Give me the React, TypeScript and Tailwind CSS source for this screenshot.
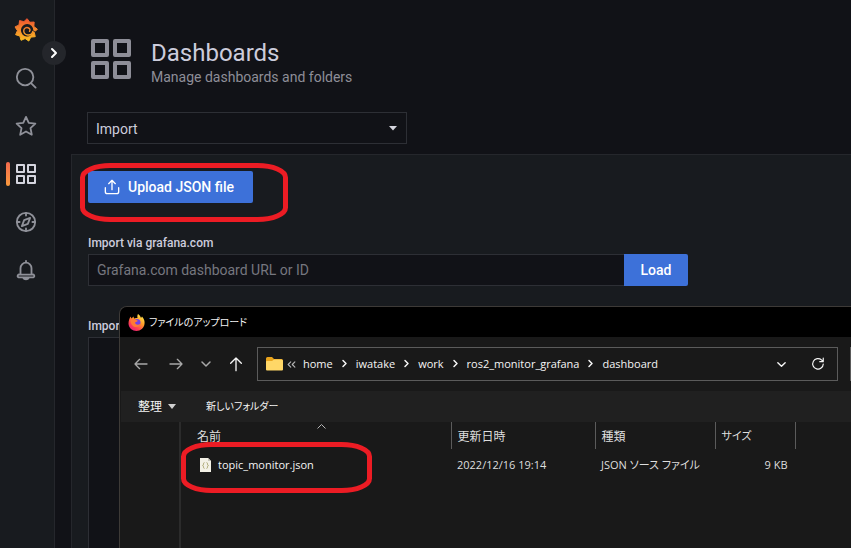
import type { ReactNode } from "react";

const RED = "#ec1c24";

function Tile({ size, stroke, className }: { size: number; stroke: number; className?: string }) {
  const gap = size / 10;
  const box = (size - gap) / 2;
  const inner = box - stroke;
  const spots = [stroke / 2, box + gap + stroke / 2];
  return (
    <svg width={size} height={size} viewBox={`0 0 ${size} ${size}`} fill="none" stroke="currentColor" strokeWidth={stroke} strokeLinejoin="round" className={className}>
      {spots.map((y) => spots.map((x) => <rect key={`${x}-${y}`} x={x} y={y} width={inner} height={inner} />))}
    </svg>
  );
}

function Icon({ children, size = 22, width = 2 }: { children: ReactNode; size?: number; width?: number }) {
  return (
    <svg width={size} height={size} viewBox="0 0 24 24" fill="none" stroke="currentColor" strokeWidth={width} strokeLinecap="round" strokeLinejoin="round" aria-hidden="true">
      {children}
    </svg>
  );
}

const TEETH = 9;
const gear = Array.from({ length: TEETH * 2 }, (_, i) => {
  const angle = (Math.PI * i) / TEETH - Math.PI / 2 + 0.1;
  const radius = i % 2 === 0 ? 11.4 : 8.6;
  return `${(12 + radius * Math.cos(angle)).toFixed(2)},${(12 + radius * Math.sin(angle)).toFixed(2)}`;
}).join(" ");

function GrafanaLogo() {
  return (
    <svg width="24" height="24" viewBox="0 0 24 24" fill="none" aria-hidden="true">
      <defs>
        <linearGradient id="flame" gradientUnits="userSpaceOnUse" x1="12" y1="0" x2="12" y2="24">
          <stop offset="0" stopColor="#ee5030" />
          <stop offset="0.5" stopColor="#f58a2c" />
          <stop offset="1" stopColor="#fbc520" />
        </linearGradient>
      </defs>
      <polygon points={gear} fill="url(#flame)" stroke="url(#flame)" strokeLinejoin="round" />
      <path d="M23.500 14.500 19.300 12.500A6.200 6.200 0 1 0 12.800 18.500C16 18.500 18.500 16.500 19.300 13.500Z" fill="#181b1f" />
      <path d="M18.800 13.500C18.300 16 16.200 17.300 13.800 17 10.800 16.600 9.400 14.500 9.800 12.200 10.200 10.200 12 9.200 14 9.700 16 10.200 16.500 12 15.500 13.200" stroke="url(#flame)" strokeWidth="1.400" strokeLinecap="round" />
    </svg>
  );
}

function NavItem({ label, active, children }: { label: string; active?: boolean; children: ReactNode }) {
  return (
    <a href="#" aria-label={label} className={`relative flex h-12 w-full items-center justify-center ${active ? "text-[#d4d5de]" : "text-[#8f9199]"}`}>
      {active && <span className="absolute left-1.5 h-6 w-1 rounded-sm bg-linear-to-b from-[#f2694d] to-[#f99a3c]" />}
      {children}
    </a>
  );
}

function Sidebar() {
  return (
    <nav aria-label="Main" className="relative flex w-[55px] shrink-0 flex-col border-r border-[#25272c] bg-[#181b1f] pt-1.5 pr-0.5">
      <a href="#" aria-label="Grafana" className="flex h-12 items-center justify-center">
        <GrafanaLogo />
      </a>
      <NavItem label="Search">
        <Icon>
          <circle cx="11" cy="11" r="9" />
          <path d="m17.500 17.500 5 5" />
        </Icon>
      </NavItem>
      <NavItem label="Starred">
        <Icon>
          <path d="m12 2 3 6.600 7.200.8-5.300 4.900 1.400 7.200L12 18l-6.300 3.500 1.400-7.200-5.300-4.900L9 8.600Z" />
        </Icon>
      </NavItem>
      <NavItem label="Dashboards" active>
        <Tile size={20} stroke={2} />
      </NavItem>
      <NavItem label="Explore">
        <Icon>
          <circle cx="12" cy="12" r="10" />
          <path d="M12 2v3M12 19v3M2 12h3M19 12h3M16.500 7.500l-2.500 6.500-6.500 2.500 2.500-6.500Z" />
        </Icon>
      </NavItem>
      <NavItem label="Alerting">
        <Icon>
          <path d="M12 2v2M6 17v-7a6 6 0 0 1 12 0v7M5 17h14a1.500 1.500 0 0 1 1 3H4a1.500 1.500 0 0 1 1-3ZM9 20.500a3.200 2.500 0 0 0 6 0" />
        </Icon>
      </NavItem>
      <button type="button" aria-label="Expand menu" className="absolute top-[41px] -right-3 flex size-6 items-center justify-center rounded-full bg-[#24262b] text-white">
        <Icon size={16} width={3}>
          <path d="m9 6 6 6-6 6" />
        </Icon>
      </button>
    </nav>
  );
}

function Ring({ className, width, height }: { className: string; width: number; height: number }) {
  return (
    <svg width={width} height={height} className={`pointer-events-none absolute ${className}`} fill="none" stroke={RED} strokeWidth={5} aria-hidden="true">
      <rect x={2.5} y={2.5} width={width - 5} height={height - 5} rx={28} ry={12} />
    </svg>
  );
}

function Firefox() {
  return (
    <svg width="17" height="17" viewBox="0 0 34 34" aria-hidden="true">
      <defs>
        <linearGradient id="fox" x1="0.85" y1="0.05" x2="0.2" y2="0.95">
          <stop offset="0" stopColor="#fff04d" />
          <stop offset="0.4" stopColor="#ff9a2a" />
          <stop offset="0.75" stopColor="#ff4050" />
          <stop offset="1" stopColor="#e5207c" />
        </linearGradient>
      </defs>
      <path d="M20 0c4 3 5 5 6 8l2-3c4 5 6 9 5 15-1 8-8 14-16 14S1 28 1 19C1 13 3 9 5 5l2 4 4-4 1 4c3-1 5-1 7-1-1-3 0-6 1-8Z" fill="url(#fox)" />
      <circle cx="18" cy="17" r="7" fill="#7542e5" />
      <path d="M5 12c4-3 8-3 12 0l3 2-6 3c1 5 7 6 11 2-1 7-11 10-16 4-3-3-4-7-4-11Z" fill="#ff7a35" />
    </svg>
  );
}

function FolderIcon() {
  return (
    <svg width="17" height="14" viewBox="0 0 17 14" aria-hidden="true" className="shrink-0">
      <path d="M0 1.500Q0 0 1.500 0H6l2 2h7.500q1.500 0 1.500 1.500V7H0Z" fill="#e8a31c" />
      <path d="M0 4.500Q0 4 1 4h5l2-1.500h7.500Q17 2.500 17 4v8.500q0 1-1 1H1q-1 0-1-1Z" fill="#ffd767" />
    </svg>
  );
}

function JsonIcon() {
  return (
    <svg width="11" height="14" viewBox="0 0 11 14" fill="none" aria-hidden="true" className="shrink-0">
      <path d="M0 0h8l3 3v11H0Z" fill="#f3f1e6" />
      <path d="M8 0v3h3" fill="#c9c8bd" />
      <path d="M4.500 4.500Q3.500 4.500 3.500 6T2.500 7.500Q3.500 7.500 3.500 9t1 1.500M6.500 4.500q1 0 1 1.500t1 1.500q-1 0-1 1.500t-1 1.500" stroke="#b5b183" />
    </svg>
  );
}

const crumbs = ["home", "iwatake", "work", "ros2_monitor_grafana", "dashboard"];

function FileDialog() {
  return (
    <section
      role="dialog"
      aria-label="ファイルのアップロード"
      className="absolute top-[306px] right-0 bottom-0 left-[119px] flex flex-col overflow-hidden rounded-tl-lg border-t border-l border-[#3d3a37] bg-[#191919] pl-px font-['Open_Sans','Noto_Sans_CJK_JP',sans-serif] text-[11px] text-[#f5f5f5] [font-feature-settings:'palt']"
    >
      <header className="-ml-px flex h-[30px] shrink-0 items-center gap-1 bg-black pl-2">
        <Firefox />
        <h2 className="text-[10px]">ファイルのアップロード</h2>
      </header>
      <div className="flex h-[54px] shrink-0 items-center">
        <div className="flex w-[136px] shrink-0 items-center pl-[11px]">
          <button type="button" aria-label="Back" className="flex w-[18px] justify-center text-[#a8a8a8]">
            <Icon size={16}><path d="M21 12H3m7-7-7 7 7 7" /></Icon>
          </button>
          <button type="button" aria-label="Forward" className="ml-[17px] flex w-[18px] justify-center text-[#a8a8a8]">
            <Icon size={16}><path d="M3 12h18m-7-7 7 7-7 7" /></Icon>
          </button>
          <button type="button" aria-label="Recent" className="ml-3 flex w-[18px] justify-center text-[#a8a8a8]">
            <Icon size={12} width={3}><path d="m4 8 8 8 8-8" /></Icon>
          </button>
          <button type="button" aria-label="Up" className="ml-3 flex w-[18px] justify-center">
            <Icon size={16}><path d="M12 22V3m-8 8 8-8 8 8" /></Icon>
          </button>
        </div>
        <div className="flex h-[34px] min-w-0 flex-1 items-center border border-[#5b5b5b] pl-2">
          <FolderIcon />
          <span className="ml-1 flex text-[#b5b5b5]">
            <Icon size={9} width={3}><path d="m10 5-7 7 7 7M21 5l-7 7 7 7" /></Icon>
          </span>
          <ol className="ml-[7px] flex items-center">
            {crumbs.map((name, i) => (
              <li key={name} className="flex items-center">
                {i > 0 && (
                  <span className="flex w-[23px] justify-center">
                    <Icon size={9} width={4}><path d="m8 4 8 8-8 8" /></Icon>
                  </span>
                )}
                <a href="#">{name}</a>
              </li>
            ))}
          </ol>
          <button type="button" aria-label="History" className="ml-auto">
            <Icon size={11} width={3}><path d="m4 8 8 8 8-8" /></Icon>
          </button>
          <button type="button" aria-label="Reload" className="mr-3 ml-6">
            <Icon size={14} width={2}>
              <path d="M21 12a9 9 0 1 1-3-7l3 3M21 2v6h-6" />
            </Icon>
          </button>
        </div>
        <div className="ml-3 h-[34px] w-px shrink-0 bg-[#5b5b5b]" />
      </div>
      <div className="flex h-[31px] shrink-0 items-center gap-[30px] bg-[#202020] pl-[17px]">
        <button type="button" className="flex items-center gap-1.5 text-xs">
          整理
          <svg width="8" height="5" viewBox="0 0 8 5" fill="#d0d0d0" aria-hidden="true"><path d="M0 0h8L4 5Z" /></svg>
        </button>
        <button type="button" className="text-[10px]">新しいフォルダー</button>
      </div>
      <div className="flex min-h-0 flex-1">
        <aside aria-label="Folders" className="w-[60px] shrink-0 border-r-2 border-[#2b2b2b]" />
        <div className="relative min-w-0 flex-1">
          <table className="w-[615px] table-fixed border-collapse text-left">
            <thead>
              <tr className="h-[27px] text-xs text-[#dedede]">
                <th scope="col" className="relative w-[270px] border-r border-[#5b5b5b] pt-0.5 pl-4 font-normal">
                  名前
                  <svg width="9" height="5" viewBox="0 0 9 5" fill="none" stroke="#b5b5b5" className="absolute top-0.5 left-[136px]" aria-hidden="true"><path d="m.5 4.500 4-4 4 4" /></svg>
                </th>
                <th scope="col" className="w-[144px] border-r border-[#5b5b5b] pt-0.5 pl-1.5 font-normal">更新日時</th>
                <th scope="col" className="w-[120px] border-r border-[#5b5b5b] pt-0.5 pl-1.5 font-normal">種類</th>
                <th scope="col" className="border-r border-[#5b5b5b] pt-0.5 pl-1.5 text-[11px] font-normal">サイズ</th>
              </tr>
            </thead>
            <tbody>
              <tr className="h-8 text-[#dedede]">
                <td className="pl-[19px]">
                  <span className="flex items-center gap-[7px] text-[#f5f5f5]">
                    <JsonIcon />
                    topic_monitor.json
                  </span>
                </td>
                <td className="pl-1.5">2022/12/16 19:14</td>
                <td className="pl-1.5 whitespace-nowrap">JSON ソース ファイル</td>
                <td className="pr-2 text-right">9 KB</td>
              </tr>
            </tbody>
          </table>
          <Ring className="top-5 left-0" width={191} height={51} />
        </div>
      </div>
    </section>
  );
}

export default function App() {
  return (
    <div className="relative flex h-screen overflow-hidden bg-[#111217] font-[Roboto,sans-serif] text-sm text-[#ccccdc]">
      <Sidebar />
      <main className="flex min-w-0 flex-1 flex-col pl-4">
        <header className="flex items-start gap-5 pt-[39px] pl-5">
          <Tile size={40} stroke={4} className="text-[#8e8e98]" />
          <div>
            <h1 className="text-2xl leading-7">Dashboards</h1>
            <p className="leading-5 text-[#8e8e98]">Manage dashboards and folders</p>
          </div>
        </header>
        <div className="relative mt-[25px] ml-4 w-80">
          <select aria-label="Section" className="h-8 w-full appearance-none border border-[#2d2f35] bg-[#111217] px-2 pt-px text-[#ccccdc]">
            <option>Import</option>
          </select>
          <svg width="8" height="5" viewBox="0 0 8 5" fill="#d4d5de" className="pointer-events-none absolute top-[14px] right-[10px]" aria-hidden="true"><path d="M0 0h8L4 4.500Z" /></svg>
        </div>
        <div className="mt-[10px] flex-1 border-t border-l border-[#25272c] bg-[#181b1f] px-4 pt-4">
          <div className="relative w-fit">
            <button type="button" className="flex h-8 w-[165px] items-center gap-2 rounded-xs bg-[#3d71d9] px-4 font-medium whitespace-nowrap text-white">
              <Icon size={16}>
                <path d="M12 16V2m-5 5 5-5 5 5M2 13v6a3 3 0 0 0 3 3h14a3 3 0 0 0 3-3v-6" />
              </Icon>
              Upload JSON file
            </button>
            <Ring className="-top-2 -left-2" width={208} height={59} />
          </div>
          <label htmlFor="url" className="mt-8 block text-xs leading-4 font-medium">Import via grafana.com</label>
          <div className="mt-[3px] flex w-[600px]">
            <input id="url" placeholder="Grafana.com dashboard URL or ID" className="h-8 min-w-0 flex-1 border border-r-0 border-[#2d2f35] bg-[#111217] px-2 placeholder:text-[#76777f]" />
            <button type="button" className="h-8 w-16 rounded-r-xs bg-[#3d71d9] font-medium text-white">Load</button>
          </div>
          <label htmlFor="json" className="mt-8 block text-xs leading-4 font-medium">Import</label>
          <textarea id="json" className="mt-[3px] block h-56 w-[600px] resize-none border border-[#2d2f35] bg-[#111217]" />
        </div>
      </main>
      <FileDialog />
    </div>
  );
}
